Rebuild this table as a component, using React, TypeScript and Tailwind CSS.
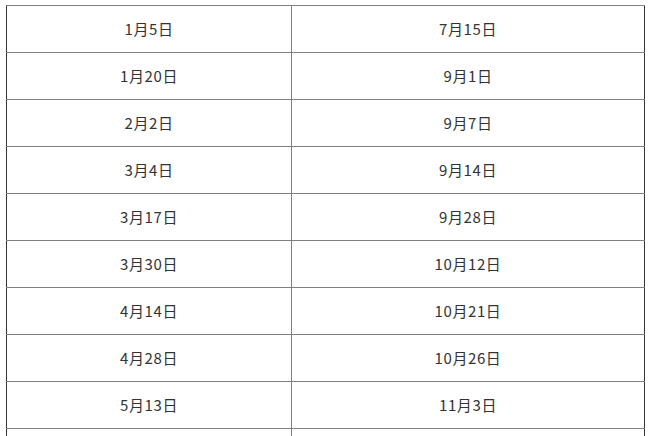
import React from "react";

const rows: [string, string][] = [
  ["1月5日", "7月15日"],
  ["1月20日", "9月1日"],
  ["2月2日", "9月7日"],
  ["3月4日", "9月14日"],
  ["3月17日", "9月28日"],
  ["3月30日", "10月12日"],
  ["4月14日", "10月21日"],
  ["4月28日", "10月26日"],
  ["5月13日", "11月3日"],
  ["", ""],
];

export default function App() {
  return (
    <div
      className="bg-white w-[651px] h-[436px] overflow-hidden pl-[6px] pt-[5px]"
      style={{ fontFamily: '"Microsoft YaHei", "Noto Sans CJK SC", sans-serif' }}
    >
      <table className="table-fixed border-collapse w-[638px] border border-[#333333] text-[15px] tracking-[0.6px] text-[#333333]">
        <colgroup>
          <col className="w-[285px]" />
          <col className="w-[353px]" />
        </colgroup>
        <tbody>
          {rows.map(([a, b], i) => (
            <tr key={i} className="h-[47px]">
              <td className="border-t border-t-[#808080] border-r border-r-[#808080] text-center align-middle p-0">
                {a}
              </td>
              <td className="border-t border-t-[#808080] text-center align-middle p-0">{b}</td>
            </tr>
          ))}
        </tbody>
      </table>
    </div>
  );
}
